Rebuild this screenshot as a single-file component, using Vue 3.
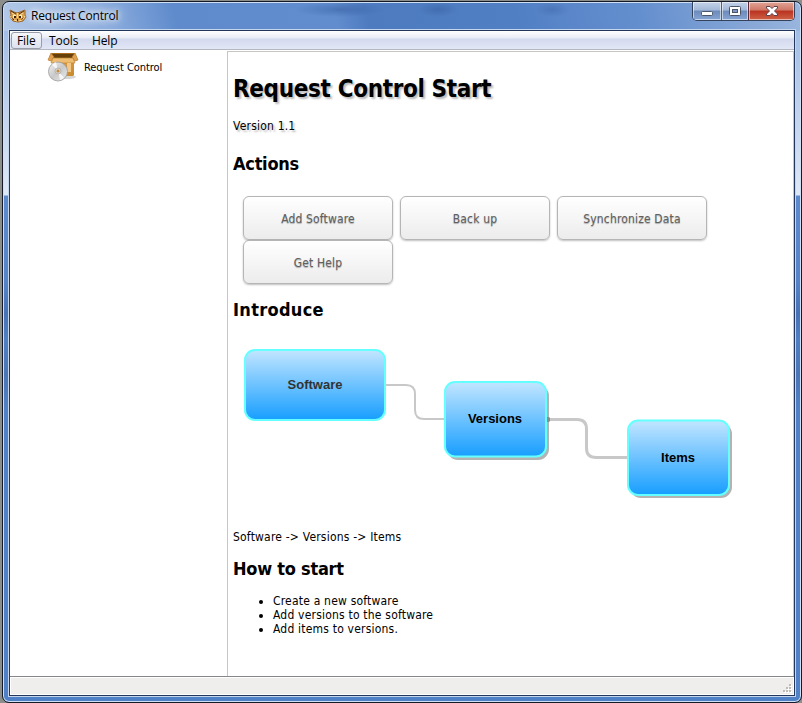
<script setup>
import { ref } from "vue";

const menus = ["File", "Tools", "Help"];
const active = ref("File");

const actions = ["Add Software", "Back up", "Synchronize Data", "Get Help"];

const steps = [
  "Create a new software",
  "Add versions to the software",
  "Add items to versions."
];
</script>

<template>
  <div class="desktop">
    <div class="window">
      <header class="titlebar">
        <svg class="app-icon" width="18" height="16" viewBox="0 0 18 16">
          <path d="M1 2 L5 4 L8 5 L11 4 L16 2 L16 7 L17 9 L14 13 L9 14 L4 13 L1 9 L2 7 Z" fill="#d9a04c" stroke="#9a6426" />
          <path d="M2 3 L7 6 M15 3 L10 6 M2 9 L5 12 M15 9 L12 12" stroke="#5b3617" fill="none" />
          <path d="M3 5 L6 7 M14 5 L11 7 M5 12 L8 13 M13 12 L10 13 M1 8 L3 11 M16 8 L14 11 M8.500 5v5" stroke="#f8d998" fill="none" />
          <path d="M4 7h3v3H4z M10 7h3v3h-3z" fill="#fbedc4" />
          <path d="M5 8h2v2H5z M10 8h2v2h-2z M8 11h1v2H8z" fill="#3a2110" />
        </svg>
        <span class="caption">Request Control</span>
        <div class="controls">
          <button class="ctl min">
            <svg width="12" height="5" viewBox="0 0 12 5">
              <rect x=".5" y=".5" width="11" height="4" rx="1" fill="#fff" stroke="#4c566a" />
            </svg>
          </button>
          <button class="ctl max">
            <svg width="12" height="10" viewBox="0 0 12 10">
              <rect x=".5" y=".5" width="11" height="9" rx="1" fill="#fff" stroke="#4c566a" />
              <rect x="3.500" y="3.500" width="5" height="3" fill="#7d99c4" stroke="#4c566a" />
            </svg>
          </button>
          <button class="ctl close">
            <svg width="12" height="10" viewBox="0 0 12 10">
              <path d="M.5 .5h3.500L6 2.500 8 .5h3.500v1.500L8.500 5l3 3v1.500H8L6 7.500 4 9.500H.5V8l3-3-3-3z" fill="#fff" stroke="#5d4048" />
            </svg>
          </button>
        </div>
      </header>

      <div class="client">
        <nav class="menubar">
          <span
            v-for="m in menus"
            :key="m"
            class="menu"
            :class="{ active: m === active }"
            @click="active = m"
          >{{ m }}</span>
        </nav>

        <div class="panes">
          <aside class="tree">
            <div class="tree-item">
              <svg width="32" height="32" viewBox="0 0 32 32">
                <defs>
                  <linearGradient id="box" x1="0" y1="0" x2="1" y2="1">
                    <stop offset="0" stop-color="#e2a856" />
                    <stop offset="1" stop-color="#c98a2d" />
                  </linearGradient>
                  <linearGradient id="disc" x1="0" y1="0" x2="1" y2="1">
                    <stop offset="0" stop-color="#f4f4f4" />
                    <stop offset=".5" stop-color="#c9c9c9" />
                    <stop offset="1" stop-color="#ececec" />
                  </linearGradient>
                </defs>
                <ellipse cx="19" cy="26" rx="10" ry="2" fill="#000" opacity=".16" />
                <path d="M6 6h21v18l-1 1H8L6 24z" fill="url(#box)" />
                <path d="M4 2h24v6H4z" fill="#a86b18" />
                <path d="M5 3h22v4H5z" fill="#664008" />
                <path d="M4 2L1 9l3 1 3-4zM28 2l3 7-3 1-3-4z" fill="#e0a050" stroke="#b87a2a" stroke-width=".7" />
                <path d="M6 7h20l2 5H4z" fill="#efbd72" stroke="#bd812e" stroke-width=".7" />
                <path d="M20 12h4v9h-4z" fill="#f2c788" />
                <circle cx="11" cy="20.500" r="9.500" fill="url(#disc)" stroke="#999" stroke-width=".8" />
                <path d="M11 20L5 13.500A9 9 0 0 1 9 11zM11 20l6 6.500A9 9 0 0 1 13 29z" fill="#fff" opacity=".75" />
                <circle cx="11" cy="20" r="3" fill="#d8d4cb" stroke="#aaa" stroke-width=".7" />
                <circle cx="11" cy="20" r="1.500" fill="#c58a3a" />
              </svg>
              <span>Request Control</span>
            </div>
          </aside>

          <main class="page">
            <h1>Request Control Start</h1>
            <p class="version">Version 1.1</p>

            <h2 class="h-actions">Actions</h2>
            <div class="actions">
              <button v-for="a in actions" :key="a">{{ a }}</button>
            </div>

            <h2 class="h-intro">Introduce</h2>
            <svg class="diagram" width="520" height="209" viewBox="233 321 520 209">
              <defs>
                <linearGradient id="node" x1="0" y1="0" x2="0" y2="1">
                  <stop offset="0" stop-color="#c2e6ff" />
                  <stop offset="1" stop-color="#179eff" />
                </linearGradient>
              </defs>
              <rect x="447" y="385" width="102" height="75" rx="11" fill="#b3b3b3" />
              <rect x="630" y="423" width="102" height="75" rx="11" fill="#b3b3b3" />
              <path d="M386 385H406Q415 385 415 394V410Q415 419 424 419H444" fill="none" stroke="#c8c8c8" stroke-width="2" />
              <path d="M547 419.500H577Q586.500 419.500 586.500 429V448Q586.500 457.500 596 457.500H628" fill="none" stroke="#c8c8c8" stroke-width="3" />
              <path d="M546 417h3l1 1v3l-1 1h-3z" fill="#8c8c8c" />
              <g fill="url(#node)" stroke="#66ffff" stroke-width="2">
                <rect x="245" y="350" width="140" height="70" rx="10" />
                <rect x="445" y="382" width="101" height="74.500" rx="10" />
                <rect x="628" y="420.500" width="101" height="74.500" rx="10" />
              </g>
              <g class="labels">
                <text x="315" y="389" fill="#333">Software</text>
                <text x="495" y="423">Versions</text>
                <text x="678" y="462">Items</text>
              </g>
            </svg>

            <p class="flow">Software -&gt; Versions -&gt; Items</p>

            <h2 class="h-start">How to start</h2>
            <ul>
              <li v-for="s in steps" :key="s">{{ s }}</li>
            </ul>
          </main>
        </div>

        <footer class="statusbar">
          <svg width="9" height="9" viewBox="0 0 9 9">
            <path d="M7 1h2v2H7zM4 4h2v2H4zM7 4h2v2H7zM1 7h2v2H1zM4 7h2v2H4zM7 7h2v2H7z" fill="#fff" />
            <path d="M6 0h2v2H6zM3 3h2v2H3zM6 3h2v2H6zM0 6h2v2H0zM3 6h2v2H3zM6 6h2v2H6z" fill="#bfbbb9" />
          </svg>
        </footer>
      </div>
    </div>
  </div>
</template>

<style>
body {
  margin: 0;
  overflow: hidden;
}
</style>

<style scoped>
* {
  box-sizing: border-box;
}
.desktop {
  width: 802px;
  height: 703px;
  padding: 1px 0 0 2px;
  background: #8b8e8b;
  font-family: "DejaVu Sans Condensed", "DejaVu Sans", sans-serif;
  font-stretch: condensed;
}
.window {
  display: flex;
  flex-direction: column;
  height: 702px;
  padding: 0 5px 5px;
  border: 1px solid #141a26;
  border-radius: 7px;
  box-shadow: inset 0 0 0 1px #cfe0f5;
  background:
    radial-gradient(closest-side, rgba(45, 85, 150, 0.45), transparent) 292px 0 / 90px 15px no-repeat,
    radial-gradient(closest-side, rgba(45, 85, 150, 0.4), transparent) 415px 0 / 40px 15px no-repeat,
    radial-gradient(closest-side, rgba(45, 85, 150, 0.3), transparent) 532px 0 / 35px 15px no-repeat,
    linear-gradient(75deg, #b4c9e8 0, #8eafdf 100px, #5f8bcc 170px, #618dce 325px, #4e7bc0 355px, #507fc3 500px, #5985c9 540px, #648fce 620px, #86a6d6 720px, #9bb7df) 0 0 / 100% 29px no-repeat,
    linear-gradient(#a2bde5 0, #dfe8f6 165px, #5d89cd 166px, #5784c9 250px, #4872b5 283px, #507fc3 310px, #4b75b6 345px, #5080c5 375px, #5080c5) 0 28px / 100% 100% no-repeat;
}
.titlebar {
  display: flex;
  align-items: flex-start;
  height: 27px;
}
.app-icon {
  margin: 6px 0 0 1px;
}
.caption {
  height: 20px;
  margin-top: 1px;
  padding: 5px 4px 0;
  line-height: 16px;
  font-family: "Open Sans", "Noto Sans", sans-serif;
  font-size: 12px;
  font-stretch: normal;
  letter-spacing: -0.2px;
  white-space: nowrap;
  color: #000;
  text-shadow: 0 0 6px #fff, 0 0 10px #fff, 0 0 14px #fff;
}
.controls {
  display: flex;
  width: 103px;
  height: 19px;
  margin-left: auto;
  margin-right: 1px;
  border: 1px solid #33425d;
  border-top: 0;
  border-radius: 0 0 5px 5px;
  overflow: hidden;
}
.ctl {
  display: flex;
  align-items: center;
  justify-content: center;
  padding: 0;
  border: 0;
  box-shadow: inset 0 0 0 1px rgba(255, 255, 255, 0.55);
  background: linear-gradient(#c3d2e8 0, #a3b8d8 45%, #6c8bbb 50%, #86a5d3 100%);
}
.min {
  width: 28px;
  padding-top: 5px;
}
.max {
  width: 27px;
  border-left: 1px solid #4c608a;
}
.close {
  flex: 1;
  border-left: 1px solid #5c2a35;
  background: linear-gradient(#e0a496 0, #cf7866 45%, #b93220 50%, #cf6248 100%);
}
.client {
  display: flex;
  flex-direction: column;
  flex: 1;
  min-height: 0;
  padding: 1px;
  border: 1px solid #c4d5ec;
  box-shadow: inset 0 0 0 1px #23365c;
}
.menubar {
  display: flex;
  height: 19px;
  padding: 1px 1px 0;
  border-bottom: 1px solid #b4b6c2;
  background: linear-gradient(#fff 0, #e8ecf6 7px, #d4daee 8px, #e2e7f6 18px);
  font: 12px/16px "Open Sans", "Noto Sans", sans-serif;
}
.menu {
  height: 17px;
  margin-right: 1.500px;
  padding: 0 5px;
  border: 1px solid transparent;
  border-radius: 3px;
  letter-spacing: -0.1px;
}
.menu.active {
  border-color: #9a9ca8;
  background: linear-gradient(#f6f7fb, #dde1ee);
}
.panes {
  display: flex;
  height: 626px;
  padding-top: 1px;
  background: #fff;
}
.tree {
  width: 217px;
}
.tree-item {
  display: flex;
  align-items: center;
  height: 32px;
  padding-left: 37px;
  font-size: 11px;
}
.tree-item span {
  margin-left: 5px;
  letter-spacing: -0.050px;
  white-space: nowrap;
}
.page {
  flex: 1;
  padding-left: 5px;
  border: 1px solid #c6c6c6;
  border-bottom: 0;
  font-size: 12px;
  line-height: 14px;
  letter-spacing: 0.2px;
  color: #000;
}
h1 {
  margin: 22px 0 0;
  font-size: 24px;
  line-height: 30px;
  letter-spacing: -0.350px;
  white-space: nowrap;
  text-shadow: 2px 2px 2px #bbb;
}
p {
  margin: 0;
}
.version {
  margin-top: 15px;
  text-shadow: 2px 2px 2px #bbb;
}
h2 {
  margin: 0;
  font-size: 18px;
  line-height: 22px;
  letter-spacing: -0.250px;
}
.h-actions {
  margin-top: 20px;
}
.actions {
  display: grid;
  grid-template-columns: repeat(3, 150px);
  grid-auto-rows: 44px;
  column-gap: 7px;
  margin: 21px 0 0 10px;
}
.actions button {
  padding: 2px 0 0;
  border: 1px solid #b5b5b5;
  border-radius: 6px;
  background: linear-gradient(#fff, #ececec);
  box-shadow: 0 1px 2px rgba(0, 0, 0, 0.25);
  font: inherit;
  letter-spacing: 0.150px;
  color: #606060;
  text-shadow: 0 1px 1px rgba(0, 0, 0, 0.3);
}
.h-intro {
  margin-top: 15px;
  letter-spacing: 0.3px;
}
.diagram {
  display: block;
}
.labels text {
  font: bold 13px "Liberation Sans", Arial, sans-serif;
  letter-spacing: 0;
  text-anchor: middle;
}
.h-start {
  margin-top: 14px;
}
ul {
  margin: 14px 0 0;
  padding-left: 40px;
}
.statusbar {
  display: flex;
  flex: 1;
  align-items: flex-end;
  justify-content: flex-end;
  padding: 0 2px 2px;
  border-top: 1px solid #85878a;
  box-shadow: inset 0 0 0 1px #fff;
  background: #f0eeed;
}
</style>
